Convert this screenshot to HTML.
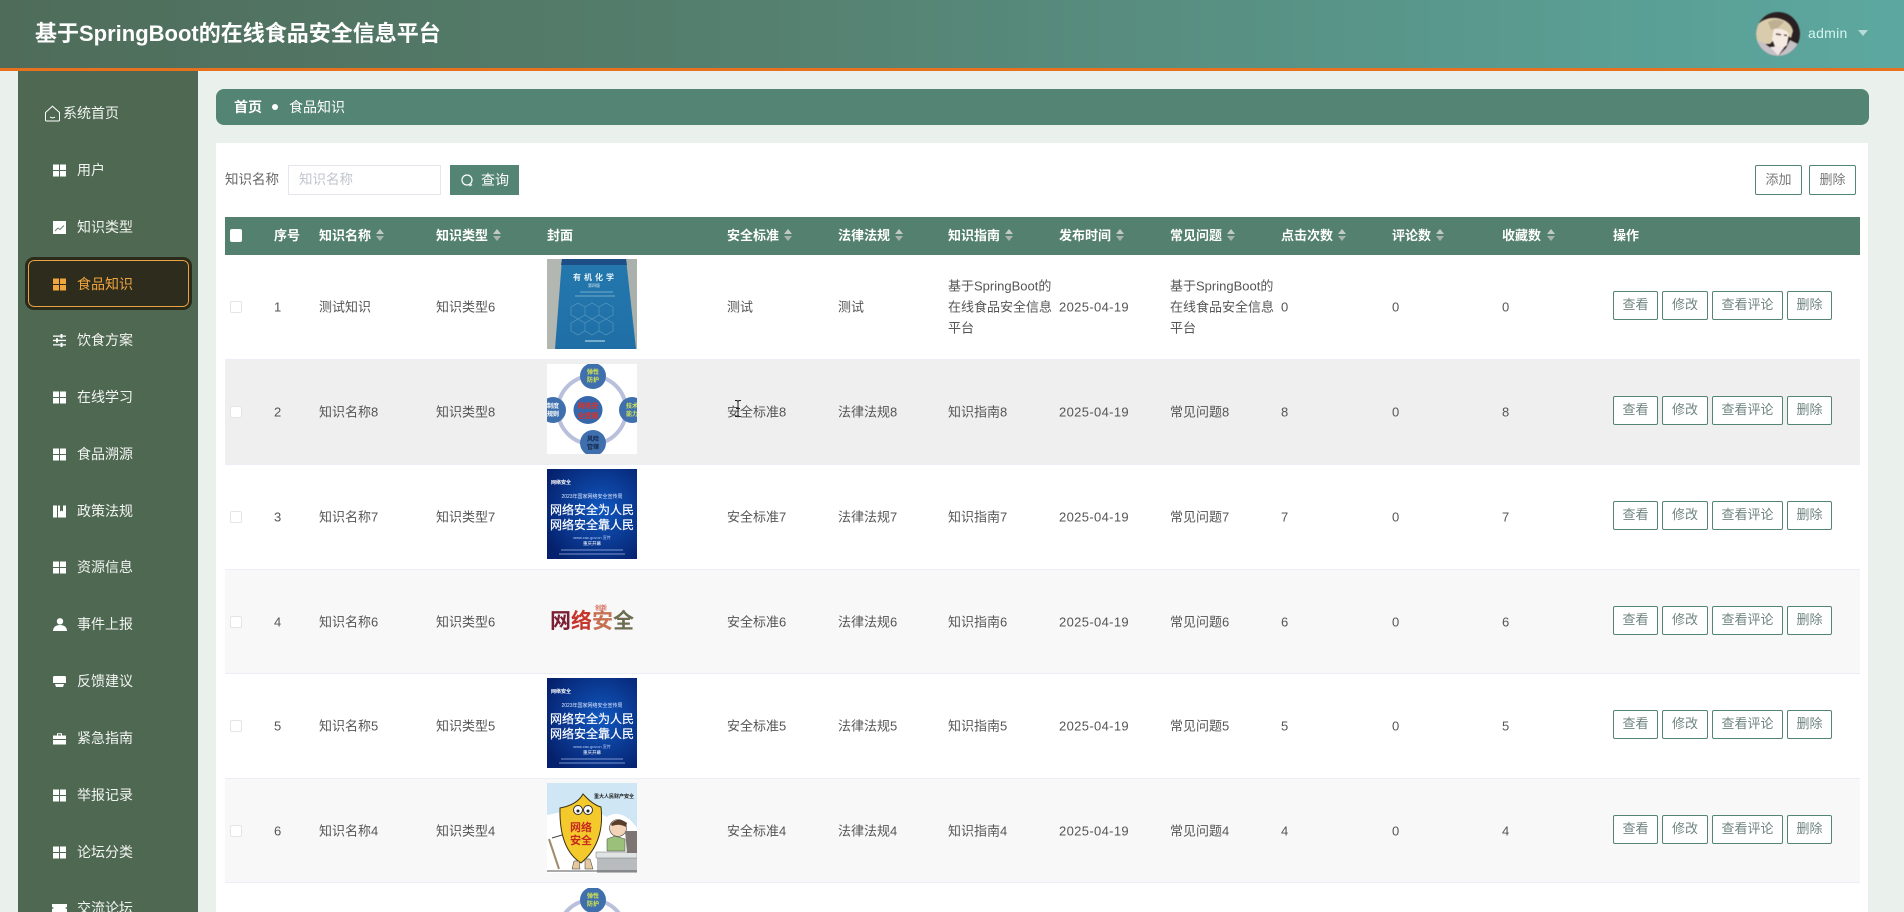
<!DOCTYPE html>
<html lang="zh-CN">
<head>
<meta charset="utf-8">
<title>基于SpringBoot的在线食品安全信息平台</title>
<style>
*{box-sizing:border-box;margin:0;padding:0}
html,body{width:1904px;height:912px;overflow:hidden;background:#eaf1ed;font-family:"Liberation Sans","Noto Sans CJK SC",sans-serif;color:#555}
#root{position:relative;width:1904px;height:912px;overflow:hidden;background:#eaf1ed}
.a{position:absolute;white-space:nowrap}
#hd{left:0;top:0;width:1904px;height:71px;background:linear-gradient(90deg,#4f6c5a 0%,#55806f 40%,#5ca8a0 100%);border-bottom:3px solid #e8711f}
#title{left:35px;top:17px;font-size:22px;line-height:34px;font-weight:700;color:#fff}
#side{left:18px;top:71px;width:180px;height:841px;background:#4f6852}
.mi{position:absolute;left:77px;font-size:14px;line-height:20px;color:#f2f5f2;white-space:nowrap}
.ic{position:absolute;left:53px;width:13px;height:13px;fill:#fff}
#act{left:25px;top:257px;width:167px;height:53px;background:#2e2c1c;border:3px solid #2b2a1b;border-radius:9px;box-shadow:inset 0 0 0 1px #e9a544}
#crumb{left:216px;top:89px;width:1653px;height:36px;background:#548474;border-radius:8px}
#panel{left:216px;top:143px;width:1652px;height:769px;background:#fff}
.lb{font-size:13.500px;line-height:20px;color:#666}
#inp{left:288px;top:165px;width:153px;height:30px;border:1px solid #e4e7ed;background:#fff;font-size:13.500px;line-height:28px;color:#c0c4cc;padding-left:10px}
#qbtn{left:450px;top:165px;width:69px;height:30px;background:#548474;color:#fff;font-size:14px;line-height:30px;padding-left:31px}
.tb{top:165px;width:47px;height:30px;border:1px solid #548474;border-radius:2px;background:#fff;font-size:13px;line-height:27px;text-align:center;color:#777}
#th{left:225px;top:217px;width:1635px;height:38px;background:#54806f}
.h{position:absolute;top:9px;font-size:13px;line-height:20px;font-weight:700;color:#fff;white-space:nowrap}
.s{position:absolute;width:8px;top:12px;height:13px}
.s:before,.s:after{content:"";position:absolute;left:0;border-left:4px solid transparent;border-right:4px solid transparent}
.s:before{top:0;border-bottom:5px solid #c2cac8}
.s:after{top:7px;border-top:5px solid #a8b4b0}
.r{position:absolute;left:225px;width:1635px;border-bottom:1px solid #ebeef5}
.t{position:absolute;font-size:13px;color:#555;white-space:nowrap;top:50%;transform:translateY(-50%);line-height:21px}
.d{letter-spacing:.35px}
.cb{position:absolute;left:5px;top:50%;margin-top:-6px;width:12px;height:12px;border:1px solid #e3e5e8;border-radius:2px;background:#fff}
.b{position:absolute;height:29px;border:1px solid #548474;border-radius:2px;background:#fff;font-size:13px;line-height:25px;text-align:center;color:#6f8480;top:50%;margin-top:-16px}
.b1{left:1388px;width:45px}.b2{left:1437px;width:46px}.b3{left:1487px;width:71px}.b4{left:1562px;width:45px}
.c0{left:49px}.c1{left:94px}.c2{left:211px}.c3{left:502px}.c4{left:613px}.c5{left:723px}.c6{left:834px}.c7{left:945px}.c8{left:1056px}.c9{left:1167px}.c10{left:1277px}
.im{position:absolute;left:547px;width:90px;height:90px;overflow:hidden;filter:blur(.35px)}
svg text{font-family:"Liberation Sans","Noto Sans CJK SC",sans-serif}
</style>
</head>
<body>
<div id="root">
<svg width="0" height="0" style="position:absolute">
<symbol id="g" viewBox="0 0 13 13"><path d="M0 0.500h6v5.500h-6zM7 0.500h6v5.500h-6zM0 7h6v5.500h-6zM7 7h6v5.500h-6z"/></symbol>
</svg>

<div id="hd" class="a"></div>
<div id="title" class="a">基于SpringBoot的在线食品安全信息平台</div>
<svg class="a" style="left:1756px;top:12px;filter:blur(.4px)" width="44" height="44" viewBox="0 0 44 44">
<defs><clipPath id="av"><circle cx="22" cy="22" r="22"/></clipPath></defs>
<g clip-path="url(#av)">
<rect width="44" height="44" fill="#2a2022"/>
<path d="M0 14C6 7 16 4 25 7c7 2 11 7 12 12l-2 7-9-6-8 8-4 4-14 0z" fill="#d9ccac"/>
<path d="M12 10c5-3 12-3 16 0l-6 6-7 2z" fill="#bfb093"/>
<path d="M18 17c6-1 13 1 15 5l-2 11-7 6-5-4-3-8z" fill="#f6ebe2"/>
<path d="M20 22l5 .8M28 23l3 .6" stroke="#5d504a" stroke-width="1.400"/>
<path d="M0 44V28l8 3 7 5 7 8zM22 44l8-8 4-8 10 5v11z" fill="#c6c1c6"/>
<path d="M14 35l8 9 6-8-5-2z" fill="#f0e4e4"/>
</g>
</svg>
<div class="a" style="left:1808px;top:23px;font-size:14px;line-height:20px;color:#d6f5f0;letter-spacing:.3px">admin</div>
<div class="a" style="left:1858px;top:30px;border-left:5px solid transparent;border-right:5px solid transparent;border-top:6px solid #b6dcd8"></div>

<div id="side" class="a"></div>
<div id="act" class="a"></div>

<svg class="a" style="left:44px;top:105px" width="17" height="17" viewBox="0 0 17 17" fill="none" stroke="#fff" stroke-width="1"><path d="M1.500 7.500L8.500 1.200l7 6.300V15a1 1 0 0 1-1 1h-12a1 1 0 0 1-1-1z"/><path d="M6 12c1.500 1 3.500 1 5 0"/></svg>
<div class="a" style="left:63px;top:103px;font-size:14px;line-height:20px;color:#f2f5f2">系统首页</div>

<svg class="ic" style="top:164px"><use href="#g"/></svg><div class="mi" style="top:160px">用户</div>
<svg class="ic" style="top:221px" viewBox="0 0 13 13"><path d="M0 0h13v13H0z"/><path d="M2 10l3-3 2 1.500 4-4" stroke="#6d8270" fill="none" stroke-width="1"/></svg><div class="mi" style="top:217px">知识类型</div>
<svg class="ic" style="top:278px;fill:#f0a63c"><use href="#g"/></svg><div class="mi" style="top:274px;color:#efa53e">食品知识</div>
<svg class="ic" style="top:334px" viewBox="0 0 13 13"><path d="M0 1.500h13v1.300H0zM0 5.800h13v1.300H0zM0 10.200h13v1.300H0z"/><path d="M7.500 0h2v4.300h-2zM3 4.300h2v4.300H3zM7.500 8.700h2V13h-2z"/></svg><div class="mi" style="top:330px">饮食方案</div>
<svg class="ic" style="top:391px"><use href="#g"/></svg><div class="mi" style="top:387px">在线学习</div>
<svg class="ic" style="top:448px"><use href="#g"/></svg><div class="mi" style="top:444px">食品溯源</div>
<svg class="ic" style="top:505px" viewBox="0 0 13 13"><path d="M0 .500h4V12.500H0zM5 .500h2v6l1.500-1 1.500 1V.500h3v12H5z"/></svg><div class="mi" style="top:501px">政策法规</div>
<svg class="ic" style="top:561px"><use href="#g"/></svg><div class="mi" style="top:557px">资源信息</div>
<svg class="ic" style="top:618px;width:14px" viewBox="0 0 14 13"><circle cx="7" cy="3.300" r="3.200"/><path d="M0 13c0-4 3-6 7-6s7 2 7 6z"/></svg><div class="mi" style="top:614px">事件上报</div>
<svg class="ic" style="top:675px" viewBox="0 0 13 13"><path d="M1.500 1h10a1.500 1.500 0 0 1 1.500 1.500V8H0V2.500A1.500 1.500 0 0 1 1.500 1z"/><path d="M2 9h9l-1 3H3z"/></svg><div class="mi" style="top:671px">反馈建议</div>
<svg class="ic" style="top:732px" viewBox="0 0 13 13"><path d="M0 3.500h13V7H0zM0 8h13v4.500H0zM4 3.500V1.200h5v2.300H8V2.200H5v1.300z"/></svg><div class="mi" style="top:728px">紧急指南</div>
<svg class="ic" style="top:789px"><use href="#g"/></svg><div class="mi" style="top:785px">举报记录</div>
<svg class="ic" style="top:846px"><use href="#g"/></svg><div class="mi" style="top:842px">论坛分类</div>
<svg class="ic" style="top:904px;width:15px;height:8px;left:52px" viewBox="0 0 15 8"><path d="M0 0h15v3l-2 1 2 1v3H0V5l2-1-2-1z"/></svg><div class="mi" style="top:898px;height:14px;overflow:hidden">交流论坛</div>

<div id="crumb" class="a"></div>
<div class="a" style="left:234px;top:97px;font-size:14px;line-height:20px;font-weight:700;color:#fff">首页</div>
<div class="a" style="left:272px;top:104px;width:6px;height:6px;border-radius:50%;background:#fff"></div>
<div class="a" style="left:289px;top:97px;font-size:14px;line-height:20px;color:#fff">食品知识</div>

<div id="panel" class="a"></div>
<div class="a lb" style="left:225px;top:170px">知识名称</div>
<div id="inp" class="a">知识名称</div>
<div id="qbtn" class="a">查询</div>
<svg class="a" style="left:460px;top:173px" width="15" height="15" viewBox="0 0 15 15" fill="none" stroke="#fff" stroke-width="1.200"><circle cx="7" cy="7" r="5"/><path d="M9.500 13l2.500-1.500"/></svg>
<div class="a tb" style="left:1755px">添加</div>
<div class="a tb" style="left:1809px">删除</div>

<div id="th" class="a">
<div style="position:absolute;left:5px;top:12px;width:12px;height:13px;background:#fff;border-radius:2px"></div>
<span class="h" style="left:49px">序号</span>
<span class="h" style="left:94px">知识名称</span><i class="s" style="left:151px"></i>
<span class="h" style="left:211px">知识类型</span><i class="s" style="left:268px"></i>
<span class="h" style="left:322px">封面</span>
<span class="h" style="left:502px">安全标准</span><i class="s" style="left:559px"></i>
<span class="h" style="left:613px">法律法规</span><i class="s" style="left:670px"></i>
<span class="h" style="left:723px">知识指南</span><i class="s" style="left:780px"></i>
<span class="h" style="left:834px">发布时间</span><i class="s" style="left:891px"></i>
<span class="h" style="left:945px">常见问题</span><i class="s" style="left:1002px"></i>
<span class="h" style="left:1056px">点击次数</span><i class="s" style="left:1113px"></i>
<span class="h" style="left:1167px">评论数</span><i class="s" style="left:1211px"></i>
<span class="h" style="left:1277px">收藏数</span><i class="s" style="left:1322px"></i>
<span class="h" style="left:1388px">操作</span>
</div>

<div class="r" style="top:255px;height:105px;background:#fff">
<i class="cb"></i><span class="t c0">1</span><span class="t c1">测试知识</span><span class="t c2">知识类型6</span><span class="t c3">测试</span><span class="t c4">测试</span>
<span class="t c5">基于SpringBoot的<br>在线食品安全信息<br>平台</span><span class="t c6 d">2025-04-19</span>
<span class="t c7">基于SpringBoot的<br>在线食品安全信息<br>平台</span><span class="t c8">0</span><span class="t c9">0</span><span class="t c10">0</span>
<span class="b b1">查看</span><span class="b b2">修改</span><span class="b b3">查看评论</span><span class="b b4">删除</span>
</div>
<div class="r" style="top:360px;height:105px;background:#efefef">
<i class="cb"></i><span class="t c0">2</span><span class="t c1">知识名称8</span><span class="t c2">知识类型8</span><span class="t c3">安全标准8</span><span class="t c4">法律法规8</span>
<span class="t c5">知识指南8</span><span class="t c6 d">2025-04-19</span><span class="t c7">常见问题8</span><span class="t c8">8</span><span class="t c9">0</span><span class="t c10">8</span>
<span class="b b1">查看</span><span class="b b2">修改</span><span class="b b3">查看评论</span><span class="b b4">删除</span>
</div>
<div class="r" style="top:465px;height:105px;background:#fff">
<i class="cb"></i><span class="t c0">3</span><span class="t c1">知识名称7</span><span class="t c2">知识类型7</span><span class="t c3">安全标准7</span><span class="t c4">法律法规7</span>
<span class="t c5">知识指南7</span><span class="t c6 d">2025-04-19</span><span class="t c7">常见问题7</span><span class="t c8">7</span><span class="t c9">0</span><span class="t c10">7</span>
<span class="b b1">查看</span><span class="b b2">修改</span><span class="b b3">查看评论</span><span class="b b4">删除</span>
</div>
<div class="r" style="top:570px;height:104px;background:#f8f8f8">
<i class="cb"></i><span class="t c0">4</span><span class="t c1">知识名称6</span><span class="t c2">知识类型6</span><span class="t c3">安全标准6</span><span class="t c4">法律法规6</span>
<span class="t c5">知识指南6</span><span class="t c6 d">2025-04-19</span><span class="t c7">常见问题6</span><span class="t c8">6</span><span class="t c9">0</span><span class="t c10">6</span>
<span class="b b1">查看</span><span class="b b2">修改</span><span class="b b3">查看评论</span><span class="b b4">删除</span>
</div>
<div class="r" style="top:674px;height:105px;background:#fff">
<i class="cb"></i><span class="t c0">5</span><span class="t c1">知识名称5</span><span class="t c2">知识类型5</span><span class="t c3">安全标准5</span><span class="t c4">法律法规5</span>
<span class="t c5">知识指南5</span><span class="t c6 d">2025-04-19</span><span class="t c7">常见问题5</span><span class="t c8">5</span><span class="t c9">0</span><span class="t c10">5</span>
<span class="b b1">查看</span><span class="b b2">修改</span><span class="b b3">查看评论</span><span class="b b4">删除</span>
</div>
<div class="r" style="top:779px;height:104px;background:#f8f8f8">
<i class="cb"></i><span class="t c0">6</span><span class="t c1">知识名称4</span><span class="t c2">知识类型4</span><span class="t c3">安全标准4</span><span class="t c4">法律法规4</span>
<span class="t c5">知识指南4</span><span class="t c6 d">2025-04-19</span><span class="t c7">常见问题4</span><span class="t c8">4</span><span class="t c9">0</span><span class="t c10">4</span>
<span class="b b1">查看</span><span class="b b2">修改</span><span class="b b3">查看评论</span><span class="b b4">删除</span>
</div>

<!-- Row 1 cover -->
<svg class="im" style="top:259px" viewBox="0 0 90 90">
<defs><linearGradient id="bk" x1="0" y1="0" x2="0" y2="1"><stop offset="0" stop-color="#2478ad"/><stop offset="1" stop-color="#1f6fa6"/></linearGradient></defs>
<rect width="90" height="90" fill="#aab0ac"/><rect x="0" width="15" height="90" fill="#b3b7b2"/>
<path d="M15 0H79L89 90H8z" fill="url(#bk)"/><path d="M15 0H79L80 6H14z" fill="#1d4f86"/>
<text x="48" y="21" font-size="8" font-weight="700" fill="#e8f2f6" text-anchor="middle" letter-spacing="3">有机化学</text>
<text x="47" y="28" font-size="4" fill="#d5e6ef" text-anchor="middle">第四版</text>
<path d="M33 33h33M28 37h40" stroke="#a9d0e4" stroke-width=".8" opacity=".8"/>
<g fill="none" stroke="#6ba8cc" stroke-width=".6" opacity=".8"><path d="M24 48l7-4 7 4v8l-7 4-7-4zM38 48l7-4 7 4v8l-7 4-7-4zM52 48l7-4 7 4v8l-7 4-7-4zM31 60l7 4v8l-7 4-7-4v-8zM45 60l7 4v8l-7 4-7-4v-8zM59 60l7 4v8l-7 4-7-4v-8z"/></g>
<path d="M38 82h20" stroke="#a9d0e4" stroke-width="1.200"/>
</svg>

<!-- Row 2 cover -->
<svg class="im" style="top:364px" viewBox="0 0 90 90">
<rect width="90" height="90" fill="#fff"/>
<circle cx="45" cy="46" r="34" fill="none" stroke="#b9c0dc" stroke-width="4"/>
<ellipse cx="41" cy="46" rx="14.500" ry="14" fill="#3567aa"/>
<circle cx="46" cy="12" r="13" fill="#3f70ad"/><circle cx="46" cy="79" r="13" fill="#3f70ad"/>
<circle cx="6" cy="46" r="13" fill="#3f70ad"/><circle cx="85" cy="46" r="13" fill="#3f70ad"/>
<text x="41" y="44" font-size="7" font-weight="700" fill="#d8322a" text-anchor="middle">网络安</text>
<text x="41" y="54" font-size="7" font-weight="700" fill="#d8322a" text-anchor="middle">全建模</text>
<text x="46" y="10" font-size="6" font-weight="700" fill="#d9e84a" text-anchor="middle">弹性</text><text x="46" y="18" font-size="6" font-weight="700" fill="#d9e84a" text-anchor="middle">防护</text>
<text x="46" y="77" font-size="6" font-weight="700" fill="#10234a" text-anchor="middle">风险</text><text x="46" y="85" font-size="6" font-weight="700" fill="#10234a" text-anchor="middle">管理</text>
<text x="6" y="44" font-size="6" font-weight="700" fill="#fff" text-anchor="middle">制度</text><text x="6" y="52" font-size="6" font-weight="700" fill="#fff" text-anchor="middle">规则</text>
<text x="85" y="44" font-size="6" font-weight="700" fill="#cfe05a" text-anchor="middle">技术</text><text x="85" y="52" font-size="6" font-weight="700" fill="#cfe05a" text-anchor="middle">能力</text>
</svg>

<!-- Row 3 cover -->
<svg class="im" style="top:469px" viewBox="0 0 90 90">
<defs><radialGradient id="bl" cx=".6" cy=".45" r=".7"><stop offset="0" stop-color="#1158c0"/><stop offset="1" stop-color="#05206c"/></radialGradient></defs>
<rect width="90" height="90" fill="url(#bl)"/>
<text x="4" y="15" font-size="5" font-weight="700" fill="#fff">网络安全</text>
<text x="45" y="29" font-size="5" fill="#dfe8ff" text-anchor="middle">2023年国家网络安全宣传周</text>
<text x="45" y="45" font-size="12" fill="#fff" stroke="#fff" stroke-width=".2" text-anchor="middle">网络安全为人民</text>
<text x="45" y="60" font-size="12" fill="#fff" stroke="#fff" stroke-width=".2" text-anchor="middle">网络安全靠人民</text>
<text x="45" y="70" font-size="4" fill="#bcd0ff" text-anchor="middle">www.cac.gov.cn 宣传</text>
<text x="45" y="76" font-size="4.500" fill="#fff" text-anchor="middle">重庆开幕</text>
<path d="M14 81h62M12 85h66" stroke="#9fb8ea" stroke-width=".8"/>
</svg>

<!-- Row 4 cover -->
<svg class="im" style="top:574px" viewBox="0 0 90 90">
<rect width="90" height="90" fill="#f8f8f8"/>
<text x="3" y="54" font-size="21" font-weight="700"><tspan fill="#7b1f33">网</tspan><tspan fill="#c6352c">络</tspan><tspan fill="#c77153">安</tspan><tspan fill="#6c6d50">全</tspan></text>
<text x="48" y="36" font-size="6" font-weight="700" fill="#d46a5a">创新</text>
</svg>

<!-- Row 5 cover -->
<svg class="im" style="top:678px" viewBox="0 0 90 90">
<rect width="90" height="90" fill="url(#bl)"/>
<text x="4" y="15" font-size="5" font-weight="700" fill="#fff">网络安全</text>
<text x="45" y="29" font-size="5" fill="#dfe8ff" text-anchor="middle">2023年国家网络安全宣传周</text>
<text x="45" y="45" font-size="12" fill="#fff" stroke="#fff" stroke-width=".2" text-anchor="middle">网络安全为人民</text>
<text x="45" y="60" font-size="12" fill="#fff" stroke="#fff" stroke-width=".2" text-anchor="middle">网络安全靠人民</text>
<text x="45" y="70" font-size="4" fill="#bcd0ff" text-anchor="middle">www.cac.gov.cn 宣传</text>
<text x="45" y="76" font-size="4.500" fill="#fff" text-anchor="middle">重庆开幕</text>
<path d="M14 81h62M12 85h66" stroke="#9fb8ea" stroke-width=".8"/>
</svg>

<!-- Row 6 cover -->
<svg class="im" style="top:783px" viewBox="0 0 90 90">
<rect width="90" height="90" fill="#fff"/>
<path d="M0 0H90V45C80 30 68 28 60 34L40 24 0 32z" fill="#cfe6f4"/>
<text x="67" y="15" font-size="5" font-weight="700" fill="#222" text-anchor="middle">重大人民财产安全</text>
<path d="M5 55L25 49" stroke="#444" stroke-width="1" fill="none"/><path d="M2 56L12 86" stroke="#a08a6a" stroke-width="2"/>
<path d="M13 25Q30 22 36 11 46 22 54 24 58 60 34 80 12 66 13 25z" fill="#f3c92c" stroke="#3a3210" stroke-width="1"/>
<circle cx="31" cy="27" r="4.500" fill="#fff" stroke="#333"/><circle cx="41" cy="27" r="4.500" fill="#fff" stroke="#333"/><circle cx="31" cy="28" r="1.500" fill="#222"/><circle cx="41" cy="28" r="1.500" fill="#222"/>
<text x="34" y="48" font-size="11" font-weight="700" fill="#c8281e" text-anchor="middle">网络</text>
<text x="34" y="61" font-size="11" font-weight="700" fill="#c8281e" text-anchor="middle">安全</text>
<path d="M27 78l-2 8h8l-1-8zM38 76l0 10h8l-3-10z" fill="#e4c9a0" stroke="#333" stroke-width=".5"/>
<path d="M50 75H90V90H50z" fill="#b8bcbe"/><path d="M49 69H90V75H49z" fill="#dfe3e4" stroke="#777" stroke-width=".5"/>
<path d="M60 68V56l8-3 10 3V68z" fill="#9ac07a" stroke="#444" stroke-width=".5"/>
<circle cx="71" cy="45" r="8.500" fill="#f2d3b8" stroke="#444" stroke-width=".6"/><path d="M64 41q7-8 16-1l-1 4q-7-4-14-1z" fill="#5a3d2b"/>
<path d="M78 48H90V70H80z" fill="#7d7574"/>
<path d="M0 88H90" stroke="#555" stroke-width="1"/>
</svg>

<!-- Row 7 cover (partly visible) -->
<svg class="im" style="top:888px;height:24px" viewBox="0 0 90 24">
<rect width="90" height="24" fill="#fff"/>
<circle cx="45" cy="46" r="34" fill="none" stroke="#b9c0dc" stroke-width="4"/>
<circle cx="46" cy="12" r="13" fill="#3f70ad"/>
<text x="46" y="10" font-size="6" font-weight="700" fill="#d9e84a" text-anchor="middle">弹性</text><text x="46" y="18" font-size="6" font-weight="700" fill="#d9e84a" text-anchor="middle">防护</text>
</svg>

<!-- text cursor -->
<svg class="a" style="left:733px;top:400px" width="10" height="17" viewBox="0 0 10 17" fill="none" stroke="#222" stroke-width="1"><path d="M2 .5h2l1 1 1-1h2M5 1.500v14M2 16.500h2l1-1 1 1h2M3 8.500h4"/></svg>
</div>
</body>
</html>
